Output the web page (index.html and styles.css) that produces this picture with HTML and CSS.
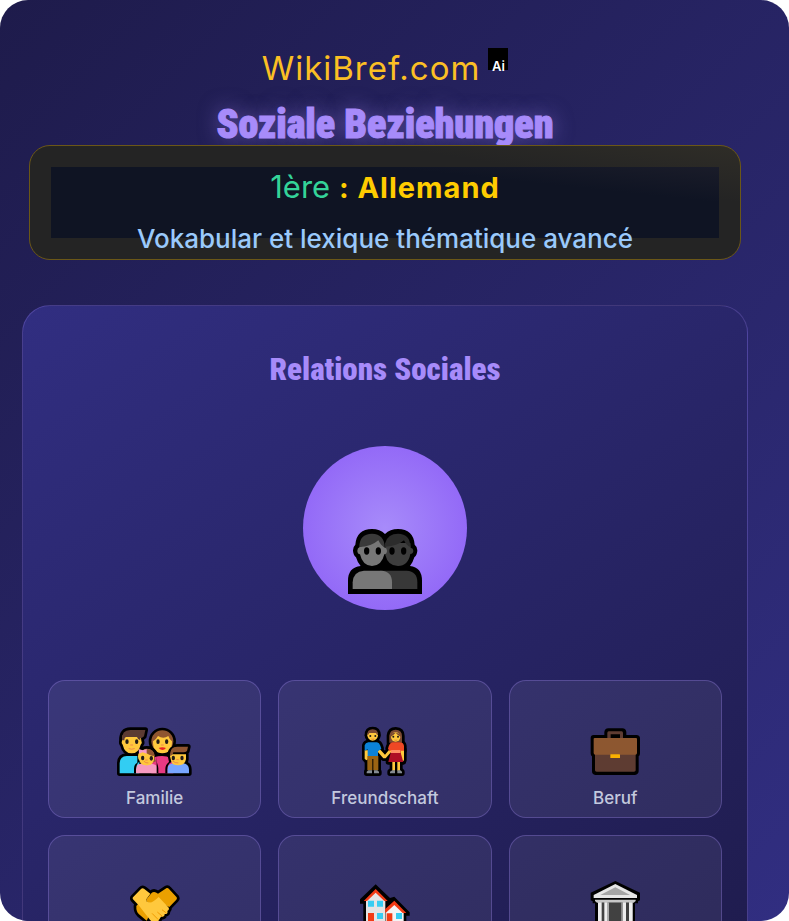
FILE: index.html
```
<!DOCTYPE html>
<html lang="de">
<head>
    <meta charset="UTF-8">
    <meta name="viewport" content="width=device-width, initial-scale=1.0">
    <title>Soziale Beziehungen</title>
    <link rel="stylesheet" href="styles.css">
</head>
<body>
<div class="page">

    <header class="header">
        <div class="logo">WikiBref.com<sup class="badge">Ai</sup></div>
        <h1>Soziale Beziehungen</h1>
        <div class="banner">
            <div class="banner-inner">
                <p class="level"><span>1ère</span> <strong>: Allemand</strong></p>
                <p class="subtitle">Vokabular et lexique thématique avancé</p>
            </div>
        </div>
    </header>

    <main class="topic">
        <h2>Relations Sociales</h2>

        <div class="hero">
            <svg width="74" height="65" viewBox="174 297 222 195">
                <path d="M174 492V452Q174 412 212 408Q203 399 198 382Q189 375 189 361Q189 350 196 344Q200 297 246 297Q270 297 285 312Q300 297 324 297Q370 297 374 344Q382 350 382 361Q382 375 373 382Q368 399 360 408Q396 412 396 452V492Z"/>
                <path fill="#383838" d="M270 477V422H350Q382 424 382 457V477Z"/>
                <path fill="#777" d="M188 477V457Q190 424 222 422H274Q306 424 306 457V477Z"/>
                <path fill="#3d3d3d" d="M286 339H361L362 353Q370 355 370 362Q370 371 361 372Q354 408 324 408Q294 408 286 375Z"/>
                <path fill="#2c2c2c" d="M286 350V338Q294 311 324 311Q361 312 361 351Q349 346 342 331Q322 348 286 350Z"/>
                <path fill="#777" d="M209 351Q202 354 202 362Q202 371 210 373Q218 408 246 408Q275 408 283 373Q291 371 291 362Q291 354 283 352L266 327Z"/>
                <path fill="#3a3a3a" d="M208 351Q208 312 246 311Q284 312 284 353Q273 347 265 331Q242 351 208 351Z"/>
                <ellipse cx="230" cy="363" rx="8" ry="11"/>
                <ellipse cx="265" cy="363" rx="8" ry="11"/>
                <ellipse cx="306" cy="363" rx="8" ry="11"/>
                <ellipse cx="341" cy="363" rx="8" ry="11"/>
            </svg>
        </div>

        <div class="grid">
            <div class="card">
                <svg width="76" height="50" viewBox="51 48 228 150">
                    <defs>
                        <g id="family">
                            <path fill="#e83a83" d="M154 190V150Q160 138 186 138Q218 138 220 160V190Z"/>
                            <path fill="#32cdf3" d="M59 190V159Q60 139 80 138H118V190Z"/>
                            <path fill="#ffc83d" d="M66 92Q63 99 68 104Q74 130 95 130Q116 130 122 104Q128 99 124 92L122 76H68Z"/>
                            <path fill="#5c3b32" d="M66 91Q64 60 91 60H136L132 79Q128 84 121 85L121 91Q113 88 111 81H78Q73 82 73 91Z"/>
                            <circle cx="187" cy="94" r="33" fill="#8f5530"/>
                            <path fill="#ffc83d" d="M159 94Q169 88 174 78Q190 88 205 78Q209 90 216 94Q217 130 187 130Q158 130 159 94Z"/>
                            <path fill="#f69ac1" d="M108 190V178Q108 162 122 161H156Q173 163 173 179V190Z"/>
                            <path fill="#79a6ff" d="M202 190V178Q202 161 222 160H248Q266 161 267 178V190Z"/>
                            <path fill="#8f5530" d="M117 138Q116 117 140 116Q163 117 164 138Q163 149 168 154L157 158H148Z"/>
                            <path fill="#ffc83d" d="M118 132L146 121Q150 132 162 137Q163 166 140 166Q118 166 118 139Z"/>
                            <path fill="#ffc83d" d="M210 133H258V148Q255 166 234 166Q214 166 212 149Q205 142 210 133Z"/>
                            <path fill="#8f5530" d="M210 138Q208 110 232 110H264L261 123Q257 127 250 127H220Q218 137 210 138Z"/>
                        </g>
                    </defs>
                    <use href="#family" class="outline"/>
                    <use href="#family"/>
                    <path d="M126 128L137 108Q158 106 170 124V190H175V175Q174 166 171 158L170 138Q169 121 155 114Q140 106 126 111Z"/>
                    <path d="M108 190H102V177Q102 162 112 158L112 132Q114 112 137 111Q109 122 118 155Q109 162 108 178ZM202 190H196V177Q196 164 207 156L202 133Q205 105 235 106Q207 111 210 139L214 156Q202 163 202 178Z"/>
                    <circle cx="133" cy="139" r="19" fill="#ffc83d"/>
                    <path fill="#ffc83d" d="M118 137Q128 120 153 123L162 137Q164 166 140 166Q118 166 118 145Z"/>
                    <path fill="#8f5530" d="M135 119Q160 112 164 138Q146 137 135 125Z"/>
                    <path fill="#f49ac8" d="M116 117L128 121L140 117V131L128 127L117 131Z"/>
                    <g fill="#211b18">
                        <ellipse cx="81" cy="95" rx="5" ry="7"/><ellipse cx="110" cy="95" rx="5" ry="7"/>
                        <ellipse cx="174" cy="95" rx="5" ry="7"/><ellipse cx="200" cy="95" rx="5" ry="7"/>
                        <ellipse cx="128" cy="144" rx="5" ry="7"/><ellipse cx="154" cy="145" rx="5" ry="7"/>
                        <ellipse cx="220" cy="144" rx="5" ry="7"/><ellipse cx="246" cy="144" rx="5" ry="7"/>
                    </g>
                    <g fill="none" stroke="#f08a4b" stroke-width="3" stroke-linecap="round">
                        <path d="M87 116Q95 120 103 116M92 105H98M132 154Q137 160 144 159M218 153Q225 160 234 159M230 149H235M137 150H142M184 105H190"/>
                    </g>
                    <path fill="#e92222" d="M176 114Q187 110 198 114Q188 126 176 114Z"/>
                </svg>
                <span>Familie</span>
            </div>

            <div class="card">
                <svg width="50" height="50" viewBox="90 48 150 150">
                    <defs>
                        <g id="couple">
                            <path fill="#ffc83d" d="M104 121H114V148L109 151L104 146ZM147 115L165 134L181 115L188 121L167 145H160L143 125Z"/>
                            <path fill="#0b82d8" d="M104 122V106Q106 98 115 97H141Q148 98 151 107L154 116L144 124V138H113V118Z"/>
                            <path fill="#9b6413" d="M112 138H145V181H130V147H127V181H112Z"/>
                            <circle cx="128" cy="76" r="16" fill="#ffc83d"/>
                            <path fill="#7b4932" d="M112 76Q111 58 128 58Q145 58 144 76Q140 75 138 69H118Q116 75 112 76Z"/>
                            <path fill="#7b4932" d="M178 98V77Q180 59 197 59Q216 60 216 78V98Z"/>
                            <ellipse cx="197" cy="81" rx="14" ry="14" fill="#ffc83d"/>
                            <path fill="#ffc83d" d="M211 119H222V151L217 155L211 147ZM187 152H195V182H187ZM202 152H210V182H202Z"/>
                            <path fill="#ef4825" d="M174 116Q178 98 188 97H209Q221 98 222 108V122H212V130H182L185 119L179 124Z"/>
                            <path fill="#ae0e25" d="M182 128H212L220 156H175Z"/>
                            <path fill="#858b92" d="M110 190V185L115 181H126V190ZM132 190V181H142L147 185V190ZM180 190V185L187 181H195V190ZM202 190V181H211L216 185V190Z"/>
                        </g>
                    </defs>
                    <use href="#couple" class="outline"/>
                    <use href="#couple"/>
                    <path fill="#ff8d65" d="M184 120H211V129H182Z"/>
                    <path fill="#7b4932" d="M182 80Q181 68 197 68Q190 76 182 80ZM197 68Q211 69 213 81Q204 77 197 68Z"/>
                    <g fill="#211b18">
                        <circle cx="121" cy="78" r="3"/><circle cx="136" cy="78" r="3"/>
                        <circle cx="190" cy="80" r="3"/><circle cx="204" cy="80" r="3"/>
                    </g>
                    <path fill="none" stroke="#d66b28" stroke-width="2" d="M124 87Q129 89 133 87M193 90Q198 92 202 90"/>
                </svg>
                <span>Freundschaft</span>
            </div>

            <div class="card">
                <svg width="50" height="50" viewBox="90 48 150 150">
                    <path d="M92 84Q92 75 101 75H133V66Q134 56 145 55H187Q198 56 199 66V75H229Q239 75 240 84V130Q240 137 236 139V184Q235 194 225 195H106Q96 194 96 184V139Q92 137 92 130Z"/>
                    <path fill="#5e3c32" d="M142 84V68Q143 64 147 64H185Q189 65 189 69V84H180V73H152V84ZM105 132H227V181Q227 185 222 185H110Q105 185 105 181Z"/>
                    <path fill="#8d5730" d="M101 86Q101 84 104 84H228Q231 84 231 87V129Q231 134 226 134H106Q101 134 101 129Z"/>
                    <rect x="151" y="133" width="29" height="11" rx="1" fill="#fab000"/>
                </svg>
                <span>Beruf</span>
            </div>

            <div class="card">
                <svg width="50" height="50" viewBox="90 63 150 150">
                    <defs>
                        <g id="handshake">
                            <path fill="#eba000" d="M174 101L200 84Q204 83 207 87L230 112Q232 116 229 119L208 141L180 128L164 126Q153 133 143 127Q136 123 140 117L154 100Q162 91 174 101Z"/>
                            <path fill="#eba000" d="M109 138L118 128L148 166L140 182L117 163Q108 155 109 138Z"/>
                            <path fill="#ffc83d" d="M99 118Q97 115 99 112L123 87Q127 83 132 86L151 101L139 118Q137 126 147 127Q157 130 176 111L205 142Q210 149 202 153Q205 162 194 162Q194 172 183 170L175 183Q163 191 151 181L116 136Z"/>
                        </g>
                    </defs>
                    <use href="#handshake" class="outline"/>
                    <use href="#handshake"/>
                    <path fill="none" stroke="#f19b00" stroke-width="3" stroke-linecap="round" d="M187 150L198 158M173 157L187 169M157 161L174 178"/>
                </svg>
            </div>

            <div class="card">
                <svg width="50" height="50" viewBox="90 63 150 150">
                    <path d="M137 73L180 114L193 110L239 157V167H229V210H100V131H90V118Z"/>
                    <path fill="#e4e4e4" d="M108 121L137 94L166 123V202H108Z"/>
                    <path fill="#f4f4f4" d="M167 155L193 131L221 157V202H167Z"/>
                    <path fill="#f23b15" d="M101 123L137 87L173 123H163L137 98L111 123ZM165 148L193 122L229 159H218L193 135L166 160ZM114 159H132V202H114ZM170 160H187V202H170Z"/>
                    <path fill="#37cdf2" d="M114 122H132V140H114ZM141 122H159V140H141ZM141 159H159V177H141ZM198 159H216V177H198Z"/>
                </svg>
            </div>

            <div class="card">
                <svg width="50" height="50" viewBox="90 63 150 150">
                    <path d="M166 63L240 98V121L234 124V130H225V210H105V130H98V124L92 121V98Z"/>
                    <path fill="#e6e6e6" d="M101 105L166 72L231 105V114H101Z"/>
                    <path fill="#a5a5a5" d="M121 105L166 82L210 105Z"/>
                    <path fill="#c7c7c7" d="M105 119H227V123L221 128H111L105 123Z"/>
                    <path fill="#414141" d="M114 128H218V205H114Z"/>
                    <path fill="#ededed" d="M114 127H125V205H114ZM133 127H143V205H133ZM188 127H198V205H188ZM207 127H218V205H207Z"/>
                    <path fill="#aaa" d="M142 127H147V205H142ZM184 127H188V205H184Z"/>
                </svg>
            </div>
        </div>
    </main>

</div>
</body>
</html>
```
FILE: styles.css
```
* {
    margin: 0;
    padding: 0;
    box-sizing: border-box;
}

body {
    font-family: Inter, "Liberation Sans", sans-serif;
    background-color: #fff;
}

.page {
    height: 100vh;
    overflow: hidden;
    padding: 48px 41px 0 22px;
    border-radius: 28px;
    background: linear-gradient(135deg, #1e1b4b, #312e81);
}

/* Header */
.header {
    padding: 0 7px;
    text-align: center;
}

.logo {
    display: flex;
    justify-content: center;
    align-items: flex-start;
    gap: 8px;
    color: #fbbf24;
    font-size: 33px;
    line-height: 41px;
    letter-spacing: 1px;
}

.badge {
    width: 20px;
    height: 22px;
    background-color: #000;
    color: #fff;
    font-size: 13px;
    font-weight: 600;
    line-height: 36px;
    letter-spacing: normal;
}

h1,
h2 {
    font-family: "Roboto Condensed", Roboto, sans-serif;
    font-weight: 900;
    color: #a78bfa;
    text-align: center;
}

h1 {
    margin-top: 15px;
    font-size: 40px;
    line-height: 41px;
    -webkit-text-stroke: 1px #a78bfa;
    text-shadow: 0 0 20px rgba(167, 139, 250, 0.5);
}

.banner {
    position: relative;
    padding: 21px;
    border: 1px solid #6b5717;
    border-radius: 21px;
    background: linear-gradient(to top right, #242424 75%, #2f2d27);
}

.banner-inner {
    display: flex;
    flex-direction: column;
    background: linear-gradient(to top right, #0f1423 75%, #1a1c29);
}

.level {
    color: #34d399;
    font-size: 31px;
    line-height: 40px;
}

.level strong {
    color: #ffcc00;
    font-size: 29px;
    letter-spacing: 1px;
}

/* second line hangs out of the dark box */
.subtitle {
    margin: 15px 0 -17px;
    color: #9ac9fb;
    font-size: 26px;
    font-weight: 500;
    line-height: 32px;
}

/* Topic panel */
.topic {
    margin-top: 45px;
    padding: 44px 25px;
    border: 1px solid rgba(167, 139, 250, 0.25);
    border-radius: 28px;
    background: linear-gradient(145deg, #312e81, #1e1b4b);
}

h2 {
    font-size: 31px;
    line-height: 40px;
}

.hero {
    display: flex;
    justify-content: center;
    align-items: flex-end;
    width: 164px;
    height: 164px;
    margin: 56px auto 70px;
    padding-bottom: 16px;
    border-radius: 50%;
    background: radial-gradient(circle, #a78bfa, #8b5cf6);
}

.grid {
    display: grid;
    grid-template-columns: repeat(3, 1fr);
    gap: 17px;
}

.card {
    display: flex;
    flex-direction: column;
    align-items: center;
    gap: 12px;
    min-height: 138px;
    padding: 45px 8px 9px;
    border: 1px solid rgba(167, 139, 250, 0.3);
    border-radius: 17px;
    background-color: rgba(255, 255, 255, 0.07);
    color: #c3c9de;
    font-size: 17px;
    font-weight: 500;
    line-height: 20px;
}

.outline {
    stroke: #000;
    stroke-width: 16px;
    stroke-linejoin: round;
}
```
